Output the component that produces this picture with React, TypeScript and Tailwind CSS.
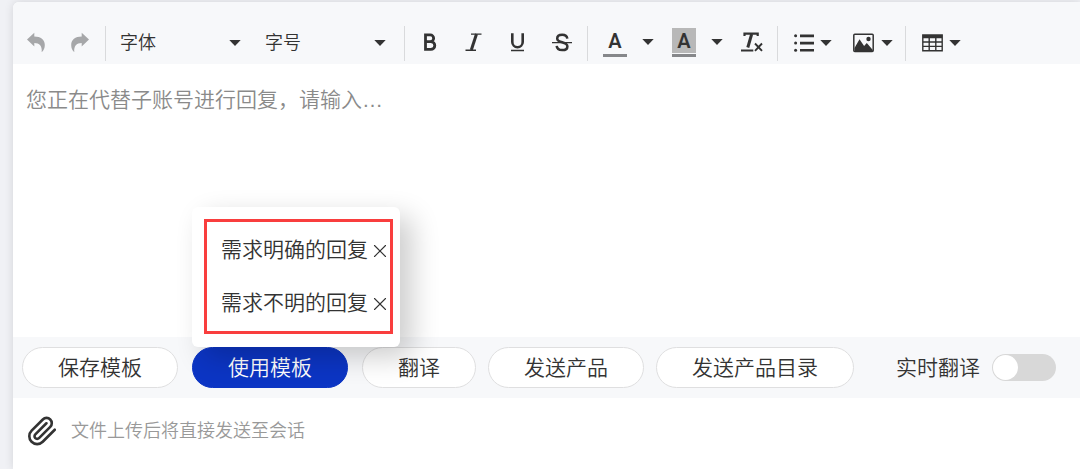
import { useState } from "react";
import type { ReactNode } from "react";
import { X } from "lucide-react";

const templates = ["需求明确的回复", "需求不明的回复"];

function Caret() {
  return (
    <svg width="12" height="6" viewBox="0 0 12 6" className="shrink-0" aria-hidden="true">
      <path d="M0.3 0h11.4L6 6z" fill="currentColor" />
    </svg>
  );
}

function Divider() {
  return <div className="h-[35px] w-px shrink-0 bg-[#d9dadc]" />;
}

function ToolButton({ label, children, className = "" }: { label: string; children: ReactNode; className?: string }) {
  return (
    <button type="button" aria-label={label} className={`flex h-8 shrink-0 items-center justify-center ${className}`}>
      {children}
    </button>
  );
}

function ToolSelect({ label }: { label: string }) {
  return (
    <div className="grid w-[121px] shrink-0 items-center">
      <select
        aria-label={label}
        className="col-start-1 row-start-1 w-full cursor-pointer appearance-none bg-transparent text-[18px] leading-6 outline-none"
      >
        <option>{label}</option>
      </select>
      <span className="pointer-events-none col-start-1 row-start-1 justify-self-end">
        <Caret />
      </span>
    </div>
  );
}

function UndoIcon({ flip = false }: { flip?: boolean }) {
  return (
    <svg width="18" height="21" viewBox="0 0 18 21" className={flip ? "-scale-x-100" : ""} aria-hidden="true">
      <path
        d="M0 7.400 7.300.8v3.800C13.800 4.600 17.800 8 17.800 13c0 3-1 5.500-3.100 7.200C15.300 14 12.500 11 7.300 11v3.400z"
        fill="#a6a7a9"
      />
    </svg>
  );
}

function PillButton({ children, active = false, onClick }: { children: ReactNode; active?: boolean; onClick?: () => void }) {
  return (
    <button
      type="button"
      onClick={onClick}
      className={`h-[41px] rounded-full border px-[35px] text-[21px] leading-8 whitespace-nowrap ${
        active ? "border-[#0c35c4] bg-[#0c35c4] text-white" : "border-[#dfdfe0] bg-white text-[#333]"
      }`}
    >
      {children}
    </button>
  );
}

function Toolbar() {
  return (
    <div className="flex items-center overflow-hidden bg-[#f7f8fa] pt-6 pb-[3px] text-[#333]">
      <div className="flex items-center gap-[26px] pr-4 pb-[3px] pl-[14px]">
        <ToolButton label="撤销">
          <UndoIcon />
        </ToolButton>
        <ToolButton label="重做">
          <UndoIcon flip />
        </ToolButton>
      </div>
      <Divider />

      <div className="flex items-center gap-6 pr-[18px] pb-px pl-[14px]">
        <ToolSelect label="字体" />
        <ToolSelect label="字号" />
      </div>
      <Divider />

      <div className="flex items-center px-[3px] pb-[3px]">
        <ToolButton label="加粗" className="w-11">
          <svg width="20" height="20" viewBox="0 0 20 20" fill="none" stroke="currentColor" strokeWidth="2.800" aria-hidden="true">
            <path d="M5.500 2.900h4.800a3.300 3.300 0 0 1 0 6.700H5.500M5.500 9.600h5.400a3.900 3.900 0 0 1 0 7.800H5.500M5.500 1.500v17.300" />
          </svg>
        </ToolButton>
        <ToolButton label="斜体" className="w-11">
          <svg width="20" height="20" viewBox="0 0 20 20" fill="none" stroke="currentColor" aria-hidden="true">
            <path d="M7 2.100h10.500M1.500 18.300H12" strokeWidth="1.400" />
            <path d="M12.500 2 7.300 18" strokeWidth="3" />
          </svg>
        </ToolButton>
        <ToolButton label="下划线" className="w-11">
          <svg width="20" height="20" viewBox="0 0 20 20" fill="none" stroke="currentColor" aria-hidden="true">
            <path d="M4.300 1.300v8.700a5.200 5.200 0 0 0 10.400 0V1.300" strokeWidth="2.600" />
            <path d="M3 18.500h13" strokeWidth="1.300" />
          </svg>
        </ToolButton>
        <ToolButton label="删除线" className="w-11">
          <svg width="20" height="20" viewBox="0 0 20 20" fill="none" stroke="currentColor" aria-hidden="true">
            <path
              d="M15.300 6.600C15 4.200 13 2.700 10.200 2.700 7.200 2.700 5.200 4.200 5.200 6.400c0 2.300 2 3.100 5 3.900 3.200.9 5.200 1.700 5.200 4.100 0 2.300-2.200 3.700-5.200 3.700-3.100 0-5.300-1.600-5.500-4.300"
              strokeWidth="2.500"
            />
            <path d="M0 10.700h20" strokeWidth="1.300" />
          </svg>
        </ToolButton>
      </div>
      <Divider />

      <div className="flex items-center gap-[18px] pr-[14px] pb-[3px] pl-[15px]">
        <div className="flex items-center gap-[15px]">
          <ToolButton label="文字颜色">
            <span className="flex flex-col border-b-[3px] border-[#86878a] pb-px">
              <span className="w-6 pt-px text-center font-[Roboto] text-[20px] leading-6 font-semibold">A</span>
            </span>
          </ToolButton>
          <Caret />
        </div>
        <div className="flex items-center gap-[15px]">
          <ToolButton label="背景颜色">
            <span className="flex flex-col border-b-[3px] border-[#86878a] pb-px">
              <span className="w-6 bg-[#b8b8b8] pt-px text-center font-[Roboto] text-[20px] leading-6 font-semibold">A</span>
            </span>
          </ToolButton>
          <Caret />
        </div>
        <ToolButton label="清除格式">
          <svg width="22" height="22" viewBox="0 0 22 22" fill="none" stroke="currentColor" aria-hidden="true">
            <path d="M3.500 5V2.600h13.200V5M0 19.500h12.300" strokeWidth="2.200" />
            <path d="M10.700 3 6.800 16.500" strokeWidth="3" />
            <path d="m14 12.500 7 7.300m0-7.300-7 7.300" strokeWidth="1.900" />
          </svg>
        </ToolButton>
      </div>
      <Divider />

      <div className="flex items-center gap-[21px] pr-3 pb-px pl-4">
        <ToolButton label="列表" className="gap-[6px]">
          <svg width="20" height="20" viewBox="0 0 20 20" fill="currentColor" aria-hidden="true">
            <path d="M6 1.500h14v2.700H6zM6 8.700h14v2.700H6zM6 15.900h14v2.700H6z" />
            <circle cx="1.600" cy="2.800" r="1.500" />
            <circle cx="1.600" cy="10" r="1.500" />
            <circle cx="1.600" cy="17.200" r="1.500" />
          </svg>
          <Caret />
        </ToolButton>
        <ToolButton label="图片" className="gap-[7px]">
          <svg width="21" height="20" viewBox="0 0 21 20" aria-hidden="true">
            <rect x=".8" y="1.200" width="19.400" height="17.400" rx="1" fill="none" stroke="currentColor" strokeWidth="1.500" />
            <path d="M1.500 18.200V15L6.500 6.200l4.600 6.800 2.700-3 6 7v1.200z" fill="currentColor" />
            <circle cx="15.500" cy="6" r="2.200" fill="currentColor" />
          </svg>
          <Caret />
        </ToolButton>
      </div>
      <Divider />

      <div className="flex items-center px-4 pb-px">
        <ToolButton label="表格" className="gap-[6px]">
          <svg width="21" height="18" viewBox="0 0 21 18" aria-hidden="true">
            <path d="M.8 1h19.400v15.800H.8zM.8 8h19.400M.8 12.400h19.400M7.200 4v13M13.800 4v13" fill="none" stroke="currentColor" strokeWidth="1.400" />
            <path d="M.8 1h19.400v3.200H.8z" fill="currentColor" />
          </svg>
          <Caret />
        </ToolButton>
      </div>
    </div>
  );
}

function TemplateMenu() {
  return (
    <div className="absolute bottom-full left-0 z-10 w-[208px] rounded-md bg-white p-3 pr-[7px] pb-[13px] shadow-[12px_10px_28px_rgba(0,0,0,0.2)]">
      <ul className="border-[3px] border-[#f93e3e] pt-px pb-[2px] pl-[14px]">
        {templates.map((name) => (
          <li key={name} className="flex h-[53px] items-center gap-px text-[#333]">
            <button type="button" className="text-[21px] leading-8 whitespace-nowrap">
              {name}
            </button>
            <button type="button" aria-label={`删除${name}`} className="shrink-0 pt-[2px]">
              <X size={22} strokeWidth={1.2} />
            </button>
          </li>
        ))}
      </ul>
    </div>
  );
}

export default function App() {
  const [menuOpen, setMenuOpen] = useState(true);
  const [live, setLive] = useState(false);

  return (
    <div className="flex min-h-screen flex-col bg-[#f0f1f5] pt-[2px] pl-[13px] font-['Liberation_Sans','Noto_Sans_CJK_SC',sans-serif] font-[350]">
      <div className="flex grow flex-col overflow-hidden rounded-tl-md bg-white shadow-[0_0_10px_rgba(0,0,0,0.12)]">
        <Toolbar />

        <textarea
          aria-label="回复内容"
          placeholder="您正在代替子账号进行回复，请输入…"
          className="min-h-[273px] w-full grow resize-none px-[13px] py-5 text-[21px] leading-8 text-[#333] outline-none placeholder:text-[#8a8a8a]"
        />

        <div className="flex items-center gap-3 bg-[#f7f8fa] px-[9px] py-[10px]">
          <div className="flex items-center gap-[14px]">
            <PillButton>保存模板</PillButton>
            <div className="relative">
              <PillButton active onClick={() => setMenuOpen(!menuOpen)}>
                使用模板
              </PillButton>
              {menuOpen && <TemplateMenu />}
            </div>
            <PillButton>翻译</PillButton>
          </div>
          <PillButton>发送产品</PillButton>
          <PillButton>发送产品目录</PillButton>
          <label className="flex cursor-pointer items-center gap-3 pl-[30px] text-[21px] leading-8 whitespace-nowrap text-[#333]">
            实时翻译
            <input type="checkbox" role="switch" checked={live} onChange={() => setLive(!live)} className="peer sr-only" />
            <span className="flex h-[27px] w-16 rounded-full bg-[#d8d8d8] p-px peer-checked:justify-end peer-checked:bg-[#0c35c4]">
              <span className="size-[25px] rounded-full bg-white" />
            </span>
          </label>
        </div>

        <div className="flex h-[71px] shrink-0 items-start gap-[15px] px-[15px] pt-[17px]">
          <button type="button" aria-label="上传附件" className="pt-px">
            <svg
              width="28"
              height="30"
              viewBox="1 1 21.400 22"
              fill="none"
              stroke="#333"
              strokeWidth="2"
              strokeLinecap="round"
              strokeLinejoin="round"
              aria-hidden="true"
            >
              <path d="m21.440 11.050-9.190 9.190a6 6 0 0 1-8.490-8.490l8.570-8.570A4 4 0 1 1 18 8.840l-8.590 8.570a2 2 0 0 1-2.830-2.830l8.490-8.480" />
            </svg>
          </button>
          <span className="text-[18px] leading-8 text-[#999]">文件上传后将直接发送至会话</span>
        </div>
      </div>
    </div>
  );
}
